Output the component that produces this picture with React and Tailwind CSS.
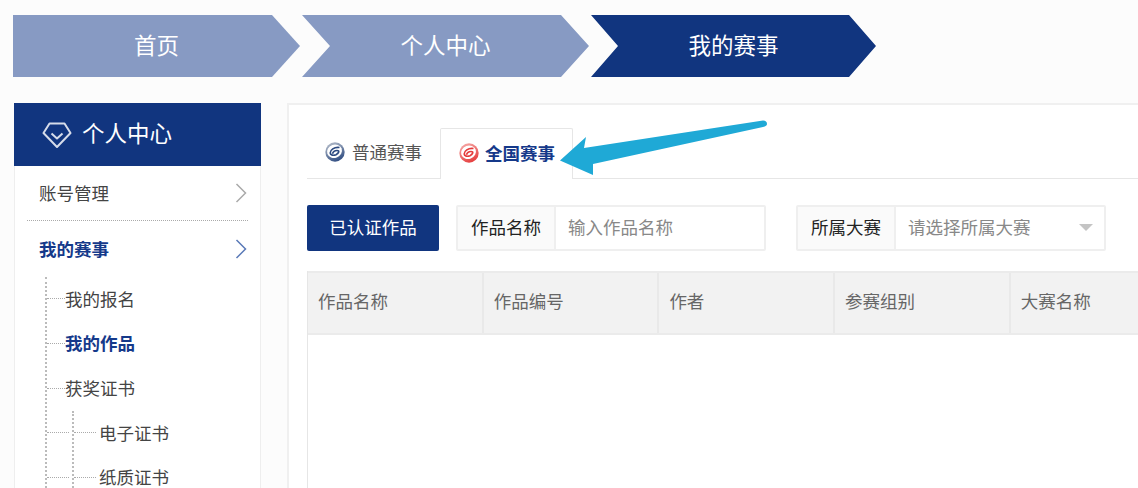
import React from "react";

const navy = "bg-[#11357f]";

function Crumbs() {
  return (
    <div className="flex gap-[2px] pl-[13px] pt-[15px] text-[22.5px] text-white">
      <div className={"flex h-[62px] w-[287px] items-center justify-center bg-[#879ac3] pb-[3px] [clip-path:polygon(0_0,259px_0,287px_31px,259px_62px,0_62px)]"}>
        首页
      </div>
      <div className="flex h-[62px] w-[287px] items-center justify-center bg-[#879ac3] pb-[3px] [clip-path:polygon(0_0,259px_0,287px_31px,259px_62px,0_62px,28px_31px)]">
        个人中心
      </div>
      <div className={"flex h-[62px] w-[285px] items-center justify-center pb-[3px] " + navy + " [clip-path:polygon(0_0,258px_0,285px_31px,258px_62px,0_62px,27px_31px)]"}>
        我的赛事
      </div>
    </div>
  );
}

function Chevron({ color }) {
  return (
    <svg width="12" height="20" viewBox="0 0 12 20" fill="none" stroke={color} strokeWidth="1.5">
      <path d="M1.5 1l9 9-9 9" />
    </svg>
  );
}

function Gem() {
  return (
    <svg width="30" height="28" viewBox="0 0 30 28" fill="none" stroke="#d6dcea" strokeWidth="2" strokeLinejoin="round">
      <path d="M7.5 2.5h15l6 9.5L15 26 1.5 12z" />
      <path d="M9.5 12.5l5.5 5 5.5-5" />
    </svg>
  );
}

function Swirl({ id, dark, light }) {
  return (
    <svg width="22" height="20" viewBox="0 0 22 20">
      <defs>
        <linearGradient id={id} x1="0.2" y1="0" x2="0.7" y2="1">
          <stop offset="0" stopColor={light} />
          <stop offset="1" stopColor={dark} />
        </linearGradient>
      </defs>
      <circle cx="11" cy="10" r="9.700" fill={"url(#" + id + ")"} />
      <ellipse cx="10.500" cy="9.200" rx="7.600" ry="6.600" fill="#fff" transform="rotate(-20 10.500 9.200)" />
      <path d="M15.500 5.500C10 4.800 6.200 8 6.200 11 6.200 13.200 9.500 13.800 12 12.700 15 11.300 15.800 8.500 13 8.500 10.500 8.500 9 10 8.500 11.800" fill="none" stroke={dark} strokeWidth="1.700" />
    </svg>
  );
}

function SubItem({ label, active }) {
  return (
    <li className="flex h-[44.7px] items-center pb-[1px]">
      <span className="w-[18px] border-t border-dotted border-[#aaa]"></span>
      <span className={active ? "font-bold text-[#15398a]" : "text-[#444]"}>{label}</span>
    </li>
  );
}

function SubSubItem({ label }) {
  return (
    <li className="flex h-[44.7px] items-center pb-[1px]">
      <span className="w-[22px] border-t border-dotted border-[#aaa]"></span>
      <span className="pl-[3px] text-[#444]">{label}</span>
    </li>
  );
}

function Sidebar() {
  return (
    <aside className="ml-[14px] w-[247px] shrink-0 border-x border-[#eeeeee] bg-white">
      <div className={"-mx-px flex h-[63px] items-center gap-[10px] pl-[28px] text-[22.5px] text-white " + navy}>
        <Gem />
        <span className="pb-[3px]">个人中心</span>
      </div>
      <div className="px-[12px] text-[17.5px]">
        <div className="flex h-[55px] items-center justify-between border-b border-dotted border-[#aaa] pl-[12px] pr-[1px] text-[#444]">
          <span>账号管理</span>
          <Chevron color="#aaaaaa" />
        </div>
        <div className="flex h-[56px] items-center justify-between pl-[12px] pr-[1px] font-bold text-[#15398a]">
          <span>我的赛事</span>
          <Chevron color="#5b7ab8" />
        </div>
        <ul className="ml-[18px] border-l-2 border-dotted border-[#bbb]">
          <SubItem label="我的报名" />
          <SubItem label="我的作品" active />
          <SubItem label="获奖证书" />
          <li className="flex">
            <div className="flex flex-col">
              <span className="flex h-[44.7px] w-[22px] items-center pb-[1px]"><span className="w-full border-t border-dotted border-[#aaa]"></span></span>
              <span className="flex h-[44.7px] w-[22px] items-center pb-[1px]"><span className="w-full border-t border-dotted border-[#aaa]"></span></span>
            </div>
            <ul className="ml-[3px] border-l-2 border-dotted border-[#bbb]">
              <SubSubItem label="电子证书" />
              <SubSubItem label="纸质证书" />
            </ul>
          </li>
        </ul>
      </div>
    </aside>
  );
}

function Tabs() {
  return (
    <div className="flex h-[51px] border-b border-[#e6e6e6] text-[17.5px]">
      <div className="flex w-[133px] items-center gap-[6px] pb-[2px] pl-[17px] text-[#555]">
        <Swirl id="swirl-blue" dark="#2c4a80" light="#b4bcc9" />
        <span>普通赛事</span>
      </div>
      <div className="-mb-px flex w-[133px] items-center gap-[5px] rounded-t-[2px] border-x border-t border-[#e6e6e6] bg-white pb-[2px] pl-[17px] font-bold text-[#15398a]">
        <Swirl id="swirl-red" dark="#e53a3a" light="#f5a9a7" />
        <span>全国赛事</span>
      </div>
    </div>
  );
}

function Filters() {
  return (
    <div className="mt-[26px] flex h-[46px] text-[17.5px]">
      <button className={"w-[132px] rounded-[2px] pb-[2px] text-white " + navy}>已认证作品</button>
      <div className="ml-[17px] flex w-[310px] rounded-[2px] border-2 border-[#efefef]">
        <div className="flex w-[98px] items-center justify-center border-r-2 border-[#efefef] bg-[#fafafa] pb-[2px] text-[#222]">作品名称</div>
        <div className="flex flex-1 items-center pb-[2px] pl-[12px] text-[#888]">输入作品名称</div>
      </div>
      <div className="ml-[30px] flex w-[310px] rounded-[2px] border-2 border-[#efefef]">
        <div className="flex w-[98px] items-center justify-center border-r-2 border-[#efefef] bg-[#fafafa] pb-[2px] text-[#222]">所属大赛</div>
        <div className="flex flex-1 items-center justify-between pb-[2px] pl-[12px] pr-[11px] text-[#888]">
          <span>请选择所属大赛</span>
          <span className="h-0 w-0 border-x-[7px] border-t-[7px] border-x-transparent border-t-[#c4c4c4]"></span>
        </div>
      </div>
    </div>
  );
}

function ResultTable() {
  const cols = ["作品名称", "作品编号", "作者", "参赛组别", "大赛名称"];
  return (
    <div className="mt-[20px] flex-1 border-l border-[#e6e6e6]">
      <div className="flex h-[64px] border-y-2 border-[#ebebeb] bg-[#f2f2f2] text-[17.5px] text-[#666]">
        {cols.map((c) => (
          <div key={c} className="flex w-[175.700px] shrink-0 items-center border-r-2 border-[#e9e9e9] pb-[4px] pl-[10px] last:border-r-0">
            {c}
          </div>
        ))}
      </div>
    </div>
  );
}

export default function App() {
  return (
    <div className="relative h-[488px] w-[1138px] overflow-hidden bg-[#fcfcfc] font-['Noto_Sans_CJK_SC','Noto_Sans',sans-serif]">
      <Crumbs />
      <div className="mt-[26px] flex h-[385px]">
        <Sidebar />
        <main className="ml-[26px] flex flex-1 flex-col border-l-2 border-t-2 border-[#f0f0f0] bg-white pl-[18px] pt-[23px]">
          <Tabs />
          <Filters />
          <ResultTable />
        </main>
      </div>
      <svg className="absolute left-[555px] top-[115px]" width="220" height="65" viewBox="555 115 220 65">
        <path d="M560 160.500L586 137L584 148L763 120.500Q767 120.500 767 124Q767 126 763 127L593 164L593 175Z" fill="#1fa9d6" />
      </svg>
    </div>
  );
}
